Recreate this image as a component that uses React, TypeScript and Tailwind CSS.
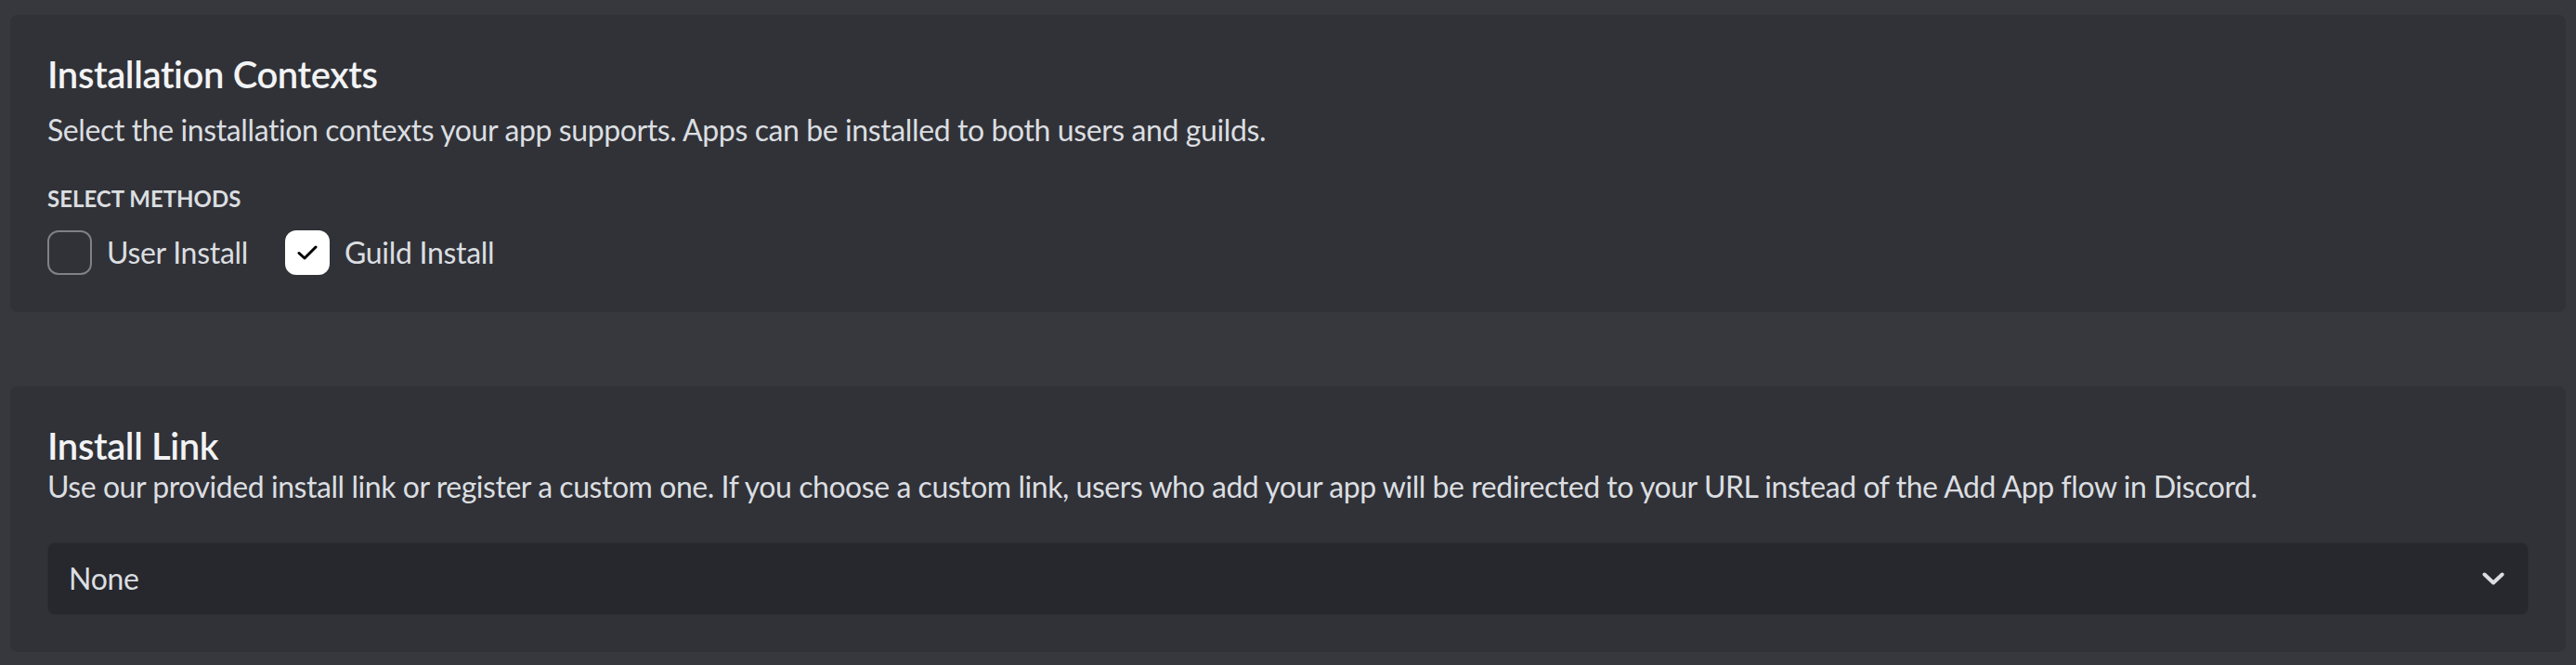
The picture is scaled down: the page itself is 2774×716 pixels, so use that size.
import { useState } from 'react'

const fontStack = 'font-["Lato","Noto_Sans",sans-serif]'

interface CheckOptionProps {
  label: string
  checked: boolean
  onToggle: () => void
}

function CheckOption({ label, checked, onToggle }: CheckOptionProps) {
  return (
    <button
      type="button"
      onClick={onToggle}
      className="flex items-center gap-4 text-left"
    >
      <span
        className={`flex h-12 w-12 items-center justify-center rounded-xl ${
          checked ? 'bg-white' : 'border-2 border-[#7f8188]'
        }`}
      >
        {checked ? (
          <svg width="22" height="16" viewBox="0 0 22 16" fill="none">
            <path
              d="M2 8.5 L8 14 L20 2"
              stroke="#000"
              strokeWidth="3"
              strokeLinecap="round"
              strokeLinejoin="round"
            />
          </svg>
        ) : null}
      </span>
      <span className="text-[32px] leading-10 tracking-[-0.3px] text-[#dbdee1]">
        {label}
      </span>
    </button>
  )
}

export default function App() {
  const [userInstall, setUserInstall] = useState<boolean>(false)
  const [guildInstall, setGuildInstall] = useState<boolean>(true)

  return (
    <div className={`min-h-screen bg-[#37383e] px-[11px] pt-4 pb-[13px] ${fontStack}`}>
      <section className="rounded-lg bg-[#313237] p-10">
        <h2 className="mb-4 text-[40px] font-semibold leading-[48px] tracking-[-0.4px] text-[#f2f3f5]">
          Installation Contexts
        </h2>
        <p className="text-[32px] leading-10 tracking-[-0.4px] text-[#dbdee1]">
          Select the installation contexts your app supports. Apps can be
          installed to both users and guilds.
        </p>

        <div className="mt-10 text-[24px] font-bold uppercase leading-7 text-[#dbdee1]">
          Select Methods
        </div>
        <div className="mt-5 flex items-center gap-10">
          <CheckOption
            label="User Install"
            checked={userInstall}
            onToggle={() => setUserInstall((value) => !value)}
          />
          <CheckOption
            label="Guild Install"
            checked={guildInstall}
            onToggle={() => setGuildInstall((value) => !value)}
          />
        </div>
      </section>

      <section className="mt-20 rounded-lg bg-[#313237] p-10">
        <h2 className="text-[40px] font-semibold leading-[48px] tracking-[-0.4px] text-[#f2f3f5]">
          Install Link
        </h2>
        <p className="text-[32px] leading-10 tracking-[-0.45px] text-[#dbdee1]">
          Use our provided install link or register a custom one. If you choose
          a custom link, users who add your app will be redirected to your URL
          instead of the Add App flow in Discord.
        </p>

        <div className="mt-10 flex h-[78px] items-center justify-between rounded-lg border border-[#2c2d32] bg-[#27282d] pl-[22px] pr-[25px]">
          <span className="text-[32px] leading-10 tracking-[-0.3px] text-[#dbdee1]">
            None
          </span>
          <svg width="24" height="14" viewBox="0 0 24 14" fill="none">
            <path
              d="M2.5 2.5 L12 11.5 L21.5 2.5"
              stroke="#dbdee1"
              strokeWidth="4"
              strokeLinecap="round"
              strokeLinejoin="round"
            />
          </svg>
        </div>
      </section>
    </div>
  )
}
